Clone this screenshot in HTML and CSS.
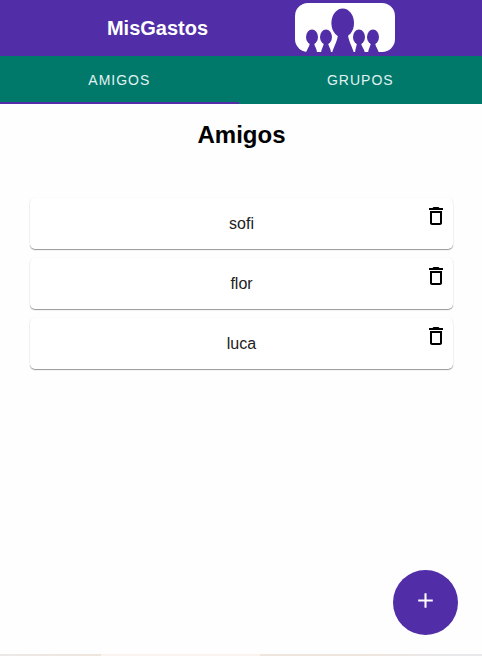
FILE: index.html
```html
<!DOCTYPE html>
<html lang="es">
<head>
<meta charset="utf-8">
<meta name="viewport" content="width=device-width, initial-scale=1">
<title>MisGastos</title>
<link rel="stylesheet" href="styles.css">
</head>
<body>
<header class="app-bar">
  <span class="brand">MisGastos</span>
  <svg class="logo" viewBox="0 0 100 50" aria-hidden="true">
    <rect class="logo-back" width="100" height="49" rx="13"/>
    <g class="logo-people">
      <ellipse cx="47.700" cy="20" rx="11.300" ry="14.500"/>
      <path d="M43 31h10c0 6 4 12 6 19H37c2-7 6-13 6-19z"/>
      <ellipse cx="17" cy="34" rx="6" ry="7.500"/>
      <path d="M15 39h4c0 4 3 6 3 11H11c1-4 4-7 4-11z"/>
      <ellipse cx="31" cy="34" rx="6" ry="7.500"/>
      <path d="M29 39h4c0 4 3 6 3 11H26c0-4 3-7 3-11z"/>
      <ellipse cx="64" cy="34" rx="6" ry="7.500"/>
      <path d="M62 39h4c0 4 3 6 4 11H60c0-4 2-7 2-11z"/>
      <ellipse cx="78" cy="34" rx="6" ry="7.500"/>
      <path d="M76 39h4c0 4 3 7 4 11H73c0-4 3-7 3-11z"/>
    </g>
  </svg>
</header>
<nav class="tabs" role="tablist">
  <button class="tab tab-active" role="tab" aria-selected="true">Amigos</button>
  <button class="tab" role="tab" aria-selected="false">Grupos</button>
</nav>
<main class="content">
  <h1 class="title">Amigos</h1>
  <ul class="friends">
    <li class="card">
      <span>sofi</span>
      <button class="delete" aria-label="Eliminar sofi"><svg viewBox="0 0 24 24"><path d="M6 19c0 1.100.900 2 2 2h8c1.100 0 2-.900 2-2V7H6v12zM8 9h8v10H8V9zm7.500-5l-1-1h-5l-1 1H5v2h14V4h-3.500z"/></svg></button>
    </li>
    <li class="card">
      <span>flor</span>
      <button class="delete" aria-label="Eliminar flor"><svg viewBox="0 0 24 24"><path d="M6 19c0 1.100.900 2 2 2h8c1.100 0 2-.900 2-2V7H6v12zM8 9h8v10H8V9zm7.500-5l-1-1h-5l-1 1H5v2h14V4h-3.500z"/></svg></button>
    </li>
    <li class="card">
      <span>luca</span>
      <button class="delete" aria-label="Eliminar luca"><svg viewBox="0 0 24 24"><path d="M6 19c0 1.100.900 2 2 2h8c1.100 0 2-.900 2-2V7H6v12zM8 9h8v10H8V9zm7.500-5l-1-1h-5l-1 1H5v2h14V4h-3.500z"/></svg></button>
    </li>
  </ul>
</main>
<button class="fab" aria-label="Agregar amigo"><svg viewBox="0 0 24 24"><path d="M19 13h-6v6h-2v-6H5v-2h6V5h2v6h6v2z"/></svg></button>
<footer class="strip"></footer>
</body>
</html>
```
FILE: styles.css
```css
* {
  box-sizing: border-box;
}

body {
  display: flex;
  flex-direction: column;
  min-height: 100vh;
  margin: 0;
  background: #fefefe;
  color: #000;
  font-family: "Liberation Sans", Arial, sans-serif;
}

button {
  border: 0;
  padding: 0;
  background: none;
  font-family: inherit;
  cursor: pointer;
}

.app-bar {
  display: flex;
  align-items: center;
  justify-content: space-evenly;
  height: 56px;
  padding-left: 20px;
  background: #512da8;
}

.brand {
  color: #fff;
  font-size: 20px;
  font-weight: 700;
}

.logo {
  width: 100px;
  height: 50px;
}

.logo-back {
  fill: #fff;
}

.logo-people {
  fill: #512da8;
}

.tabs {
  display: grid;
  grid-template-columns: auto auto;
  height: 48px;
  background: #00796b;
}

.tab {
  border-bottom: 2px solid transparent;
  border-top: 2px solid transparent;
  color: #e0f2f1;
  font-size: 14px;
  font-weight: 500;
  letter-spacing: 1px;
  text-transform: uppercase;
}

.tab-active {
  border-bottom-color: #512da8;
}

.content {
  flex: 1;
  padding: 16px 29px 0 30px;
}

.title {
  margin: 0 0 48px;
  font-size: 24px;
  line-height: 30px;
  text-align: center;
}

.friends {
  display: grid;
  gap: 9px;
  margin: 0;
  padding: 0;
  list-style: none;
}

.card {
  position: relative;
  display: flex;
  align-items: center;
  justify-content: center;
  height: 51px;
  border-radius: 5px;
  background: #fff;
  box-shadow: 0 1px 1px rgba(0, 0, 0, 0.4), 0 0 2px rgba(0, 0, 0, 0.06);
  color: #212121;
  font-size: 16px;
}

.delete {
  position: absolute;
  top: 6px;
  right: 5px;
  width: 24px;
  height: 24px;
}

.delete svg {
  display: block;
}

.fab {
  position: fixed;
  right: 24px;
  bottom: 21px;
  display: flex;
  align-items: center;
  justify-content: center;
  width: 65px;
  height: 65px;
  padding-bottom: 4px;
  border-radius: 50%;
  background: #512da8;
}

.fab svg {
  width: 25px;
  fill: #fff;
}

.strip {
  height: 2px;
  background: linear-gradient(90deg, #ebe9e8, #f0e5dc 21%, #faf3f0 21%, #faf3f0 54%, #f0e5dc 54%, #f0e5dc 75%, #e9e9ec 92%);
}
```
